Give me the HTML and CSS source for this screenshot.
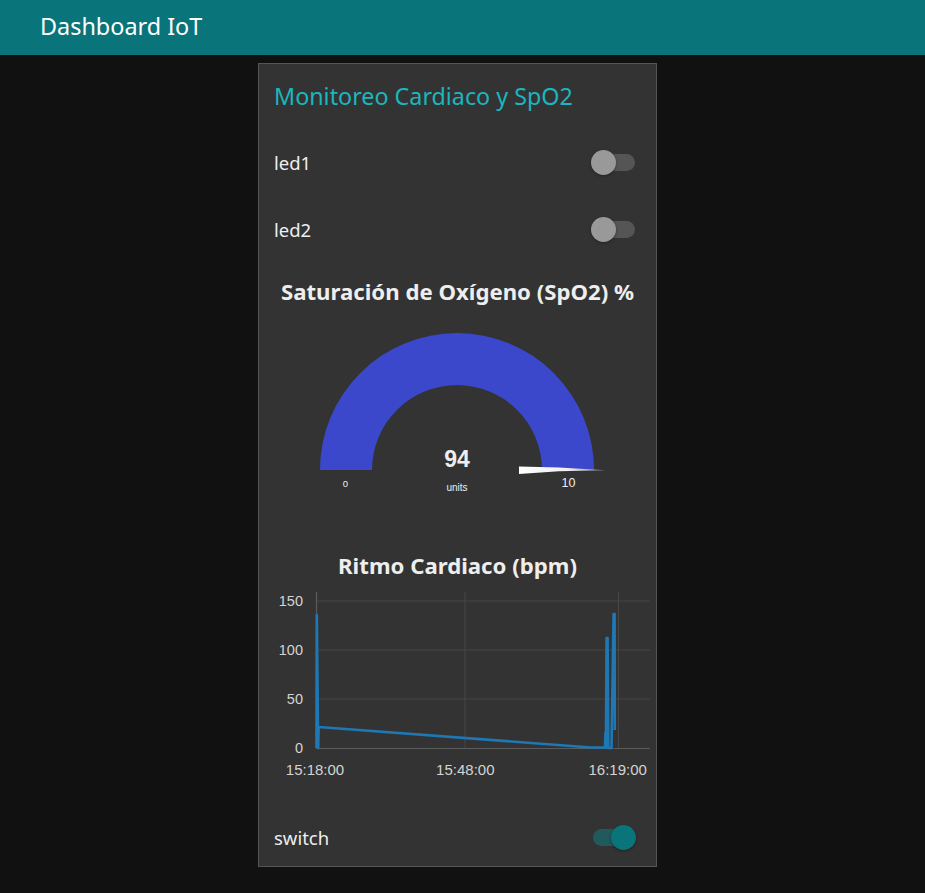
FILE: index.html
```html
<!DOCTYPE html>
<html lang="es">
<head>
<meta charset="utf-8">
<title>Dashboard IoT</title>
<link rel="stylesheet" href="styles.css">
</head>
<body>
<header class="topbar"><span class="brand">Dashboard IoT</span></header>
<main class="content">
  <section class="card">
    <div class="card-title">Monitoreo Cardiaco y SpO2</div>
    <div class="row row-led1">
      <span class="label">led1</span>
      <span class="toggle"><span class="track"></span><span class="thumb"></span></span>
    </div>
    <div class="row row-led2">
      <span class="label">led2</span>
      <span class="toggle"><span class="track"></span><span class="thumb"></span></span>
    </div>
    <div class="widget-title gauge-title">Saturación de Oxígeno (SpO2) %</div>
    <svg class="gauge" width="397" height="216" viewBox="0 0 397 216">
      <defs>
        <linearGradient id="needleGrad" x1="0" y1="0" x2="1" y2="0">
          <stop offset="0" stop-color="#ffffff"/>
          <stop offset="0.55" stop-color="#f0f0f0"/>
          <stop offset="1" stop-color="#8a8a8a"/>
        </linearGradient>
      </defs>
      <path d="M61 144 A137 137 0 0 1 335 144 L283 144 A85 85 0 0 0 113 144 Z" fill="#3b48cc"/>
      <path d="M260 140.6 L300 141.5 L347 144.3 L300 145.2 L260 148 Z" fill="url(#needleGrad)"/>
      <text class="g-value" x="198" y="141" text-anchor="middle">94</text>
      <text class="g-units" x="198" y="165" text-anchor="middle">units</text>
      <text class="g-min" x="86.5" y="161" text-anchor="middle">0</text>
      <text class="g-max" x="309.5" y="160.5" text-anchor="middle">10</text>
    </svg>
    <div class="widget-title chart-title">Ritmo Cardiaco (bpm)</div>
    <svg class="chart" width="397" height="214" viewBox="0 0 397 214">
      <g class="grid">
        <line x1="57.5" y1="9" x2="391" y2="9"/>
        <line x1="57.5" y1="58" x2="391" y2="58"/>
        <line x1="57.5" y1="107" x2="391" y2="107"/>
        <line x1="206" y1="0" x2="206" y2="156"/>
        <line x1="359.5" y1="0" x2="359.5" y2="156"/>
      </g>
      <g class="axis">
        <line x1="57.5" y1="0" x2="57.5" y2="156.5"/>
        <line x1="57.5" y1="156.5" x2="391" y2="156.5"/>
      </g>
      <g class="ylabels">
        <text x="44" y="14">150</text>
        <text x="44" y="63">100</text>
        <text x="44" y="112">50</text>
        <text x="44" y="161">0</text>
      </g>
      <g class="xlabels">
        <text x="56" y="183">15:18:00</text>
        <text x="206.3" y="183">15:48:00</text>
        <text x="358.7" y="183">16:19:00</text>
      </g>
      <path class="series" d="M57.5 156 L57.8 23 L59.2 156 L59.6 135 L332 155.5 L346 155.5 L346.4 141 L346.9 156 L347.6 46 L348.6 46 L349.3 156 L352.5 156 L354.6 22 L355.6 22 L355.8 138"/>
    </svg>
    <div class="row row-switch">
      <span class="label">switch</span>
      <span class="toggle toggle-on"><span class="track"></span><span class="thumb"></span></span>
    </div>
  </section>
</main>
</body>
</html>
```
FILE: styles.css
```css
* { box-sizing: border-box; }
html, body { margin: 0; padding: 0; }
body {
  background: #111111;
  font-family: "Noto Sans", "Open Sans", sans-serif;
  color: #eeeeee;
  width: 925px;
  height: 893px;
  overflow: hidden;
}
.topbar {
  height: 55px;
  background: #097479;
  display: flex;
  align-items: center;
  padding-left: 40px;
}
.brand {
  color: #ffffff;
  font-size: 23.4px;
  line-height: 1;
  padding-bottom: 2px;
}
.content {
  padding: 8px 0 0 258px;
}
.card {
  width: 399px;
  height: 804px;
  background: #333333;
  border: 1px solid #555555;
  display: flex;
  flex-direction: column;
}
.card-title {
  height: 64px;
  display: flex;
  align-items: center;
  padding-left: 15px;
  color: #1bb6be;
  font-size: 23.3px;
}
.row {
  display: flex;
  align-items: center;
  justify-content: space-between;
  padding: 0 20px 0 15px;
}
.row-led1 { height: 68px; }
.row-led2 { height: 66px; }
.row-switch { height: 60px; padding-top: 2px; }
.label {
  font-size: 18.5px;
  color: #eeeeee;
}
.toggle {
  position: relative;
  width: 45px;
  height: 25px;
}
.track {
  position: absolute;
  left: 2.5px;
  top: 4px;
  width: 41px;
  height: 17px;
  border-radius: 9px;
  background: #555555;
}
.thumb {
  position: absolute;
  left: 0;
  top: 0;
  width: 25px;
  height: 25px;
  border-radius: 50%;
  background: #999999;
  box-shadow: 0 1px 3px rgba(0,0,0,0.35);
}
.toggle-on .track { background: #1f5a5c; left: 1.5px; }
.toggle-on .thumb { left: 20px; background: #097479; }
.widget-title {
  display: flex;
  align-items: center;
  justify-content: center;
  font-weight: 700;
  font-size: 22.2px;
  color: #eeeeee;
}
.gauge-title { height: 64px; padding-bottom: 5px; }
.chart-title { height: 50px; padding-bottom: 4px; }
.gauge, .chart { display: block; flex: none; }
.g-value { font-family: "Liberation Sans", Arial, sans-serif; font-weight: 700; font-size: 23px; fill: #eeeeee; }
.g-units { font-family: "Liberation Sans", Arial, sans-serif; font-size: 10px; fill: #eeeeee; }
.g-min { font-family: "Liberation Sans", Arial, sans-serif; font-size: 9.5px; fill: #eeeeee; }
.g-max { font-family: "Liberation Sans", Arial, sans-serif; font-size: 12.5px; fill: #eeeeee; }
.grid line { stroke: #474747; stroke-width: 1; }
.axis line { stroke: #5a5a5a; stroke-width: 1.2; }
.ylabels text { font-family: "Liberation Sans", Arial, sans-serif; font-size: 14.5px; fill: #d4d4d4; text-anchor: end; }
.xlabels text { font-family: "Liberation Sans", Arial, sans-serif; font-size: 15px; fill: #d4d4d4; text-anchor: middle; }
.series { fill: none; stroke: #1f77b4; stroke-width: 2.6; stroke-linejoin: round; }
```
